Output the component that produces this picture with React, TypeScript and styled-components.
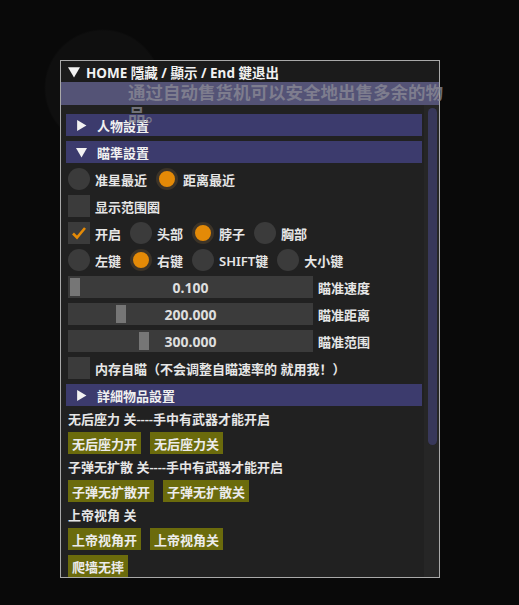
import styled, { createGlobalStyle } from 'styled-components';

const GlobalStyle = createGlobalStyle`
  html, body {
    margin: 0;
    padding: 0;
    background: radial-gradient(circle at 103px 88px, #0f0f0f 0 57px, transparent 59px), #090909;
    font-family: "Noto Sans", "Noto Sans CJK SC", sans-serif;
  }
`

const Page = styled.div`
  width: 519px;
  height: 605px;
  padding: 60px 0 0 60px;
  box-sizing: border-box;
`

const Window = styled.div`
  position: relative;
  width: 380px;
  height: 518px;
  box-sizing: border-box;
  border: 1px solid #a9a9a9;
  background: #212121;
  display: flex;
  flex-direction: column;
`

const TitleBar = styled.div`
  height: 21px;
  flex-shrink: 0;
  background: #1b1b1b;
  display: flex;
  align-items: center;
  gap: 6px;
  padding-left: 7px;
  color: #f2f2f2;
  font-size: 13.5px;
  font-weight: 700;
`

const MenuBand = styled.div`
  height: 23px;
  flex-shrink: 0;
  background: #545376;
`

const Overlay = styled.div`
  position: absolute;
  left: 67px;
  top: 20px;
  width: 322px;
  font-family: "Noto Sans CJK SC", sans-serif;
  font-size: 17.5px;
  line-height: 22px;
  font-weight: 700;
  color: rgba(140, 140, 150, 0.75);
  pointer-events: none;
`

const Body = styled.div`
  flex: 1;
  display: flex;
  min-height: 0;
`

const Content = styled.div`
  flex: 1;
  padding: 9px 2px 0 7px;
  display: flex;
  flex-direction: column;
  gap: 5px;
  overflow: hidden;
  color: #e6e6e6;
  font-size: 13px;
  font-weight: 600;
  & > * {
    flex-shrink: 0;
  }
`

const ScrollTrack = styled.div`
  width: 15px;
  padding: 3px 2px 0 4px;
  box-sizing: border-box;
  background: #262626;
`

const ScrollThumb = styled.div`
  width: 9px;
  height: 337px;
  border-radius: 5px;
  background: #38385a;
`

const Header = styled.div`
  margin-left: -2px;
  height: 22px;
  background: #3c3b6d;
  display: flex;
  align-items: center;
  gap: 10px;
  padding-left: 10px;
  color: #f0f0f0;
`

const Row = styled.div`
  height: 22px;
  display: flex;
  align-items: center;
  gap: 9px;
`

const Item = styled.label`
  display: flex;
  align-items: center;
  gap: 5px;
  white-space: nowrap;
`

const Radio = styled.span<{ $on?: boolean }>`
  width: 22px;
  height: 22px;
  border-radius: 50%;
  box-sizing: border-box;
  background: ${p => (p.$on ? '#e48a07' : '#3b3b3b')};
  border: ${p => (p.$on ? '3px solid #3d3428' : 'none')};
`

const Box = styled.span`
  width: 22px;
  height: 22px;
  background: #3b3b3b;
  display: flex;
  align-items: center;
  justify-content: center;
`

const SliderRow = styled.div`
  height: 22px;
  display: flex;
  align-items: center;
  gap: 5px;
`

const SliderFrame = styled.div`
  position: relative;
  width: 245px;
  height: 22px;
  background: #3b3b3b;
  display: flex;
  align-items: center;
  justify-content: center;
  font-size: 14px;
  font-weight: 700;
  color: #dedede;
`

const Grab = styled.span`
  position: absolute;
  top: 2px;
  width: 10px;
  height: 18px;
  background: #767676;
`

const Text = styled.div`
  height: 16px;
  line-height: 16px;
  white-space: nowrap;
`

const Buttons = styled.div`
  display: flex;
  gap: 9px;
`

const Button = styled.button`
  height: 22px;
  padding: 0 4px;
  border: none;
  background: #6b6b0c;
  color: #ececec;
  font-family: inherit;
  font-size: 13px;
  font-weight: 600;
`

const Tri = ({ dir, size }: { dir: 'down' | 'right'; size: number }) => (
  <svg width={size} height={size} viewBox="0 0 10 10">
    {dir === 'down'
      ? <polygon points="0,1 10,1 5,9.5" fill="#f2f2f2" />
      : <polygon points="1,0 9.5,5 1,10" fill="#f2f2f2" />}
  </svg>
)

const Check = () => (
  <svg width="16" height="16" viewBox="0 0 16 16">
    <polyline points="2,8.5 6,12.5 14,3" fill="none" stroke="#e48a07" strokeWidth="2.6" />
  </svg>
)

const sliders = [
  { value: '0.100', pos: 0, label: '瞄准速度' },
  { value: '200.000', pos: 0.2, label: '瞄准距离' },
  { value: '300.000', pos: 0.3, label: '瞄准范围' },
]

export default function App() {
  return (
    <Page>
      <GlobalStyle />
      <Window>
        <TitleBar>
          <Tri dir="down" size={12} />
          <span>HOME 隱藏 / 顯示 / End 鍵退出</span>
        </TitleBar>
        <MenuBand />
        <Overlay>通过自动售货机可以安全地出售多余的物品。</Overlay>
        <Body>
          <Content>
            <Header><Tri dir="right" size={11} />人物設置</Header>
            <Header><Tri dir="down" size={11} />瞄準設置</Header>
            <Row>
              <Item><Radio />准星最近</Item>
              <Item><Radio $on />距离最近</Item>
            </Row>
            <Row>
              <Item><Box />显示范围圈</Item>
            </Row>
            <Row>
              <Item><Box><Check /></Box>开启</Item>
              <Item><Radio />头部</Item>
              <Item><Radio $on />脖子</Item>
              <Item><Radio />胸部</Item>
            </Row>
            <Row>
              <Item><Radio />左键</Item>
              <Item><Radio $on />右键</Item>
              <Item><Radio />SHIFT键</Item>
              <Item><Radio />大小键</Item>
            </Row>
            {sliders.map(s => (
              <SliderRow key={s.label}>
                <SliderFrame>
                  <Grab style={{ left: 2 + s.pos * 231 }} />
                  {s.value}
                </SliderFrame>
                {s.label}
              </SliderRow>
            ))}
            <Row>
              <Item><Box />内存自瞄（不会调整自瞄速率的 就用我！）</Item>
            </Row>
            <Header><Tri dir="right" size={11} />詳細物品設置</Header>
            <Text>无后座力 关----手中有武器才能开启</Text>
            <Buttons>
              <Button>无后座力开</Button>
              <Button>无后座力关</Button>
            </Buttons>
            <Text>子弹无扩散 关----手中有武器才能开启</Text>
            <Buttons>
              <Button>子弹无扩散开</Button>
              <Button>子弹无扩散关</Button>
            </Buttons>
            <Text>上帝视角 关</Text>
            <Buttons>
              <Button>上帝视角开</Button>
              <Button>上帝视角关</Button>
            </Buttons>
            <Buttons>
              <Button>爬墙无摔</Button>
            </Buttons>
          </Content>
          <ScrollTrack>
            <ScrollThumb />
          </ScrollTrack>
        </Body>
      </Window>
    </Page>
  )
}
